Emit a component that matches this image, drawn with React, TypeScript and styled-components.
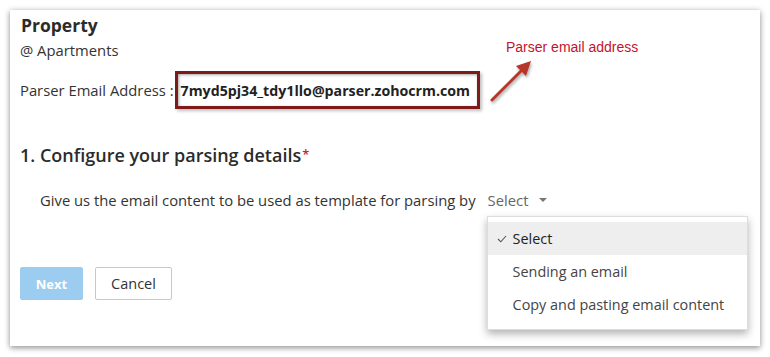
import React, { useState } from 'react';
import styled, { createGlobalStyle } from 'styled-components';

const OPTIONS = ['Select', 'Sending an email', 'Copy and pasting email content'];

export default function App() {
  const [selected, setSelected] = useState('Select');

  return (
    <>
      <GlobalStyle />
      <S_Page>
        <S_Panel>
          <S_Title>Property</S_Title>
          <S_Sub>@ Apartments</S_Sub>
          <S_EmailRow>
            <S_Label>Parser Email Address :</S_Label>
            <S_EmailBox>7myd5pj34_tdy1llo@parser.zohocrm.com</S_EmailBox>
            <S_Callout>
              <S_CalloutText>Parser email address</S_CalloutText>
              <S_Arrow width='48' height='48' viewBox='0 0 48 48'>
                <defs>
                  <filter id='sh' x='-30%' y='-30%' width='160%' height='160%'>
                    <feDropShadow dx='1' dy='2' stdDeviation='1.5' floodColor='#000' floodOpacity='0.35' />
                  </filter>
                </defs>
                <g filter='url(#sh)'>
                  <line x1='3' y1='43' x2='33' y2='13' stroke='#b8352a' strokeWidth='3' strokeLinecap='round' />
                  <polygon points='42,4 37,19 27,9' fill='#b8352a' />
                </g>
              </S_Arrow>
            </S_Callout>
          </S_EmailRow>

          <S_Heading>
            1. Configure your parsing details<S_Star>*</S_Star>
          </S_Heading>

          <S_FieldRow>
            <S_FieldText>Give us the email content to be used as template for parsing by</S_FieldText>
            <S_SelectWrap>
              <S_SelectButton>
                {selected}
                <S_Caret />
              </S_SelectButton>
              <S_Menu>
                {OPTIONS.map((o) => (
                  <S_Option key={o} active={o === selected} onClick={() => setSelected(o)}>
                    <S_Check>
                      {o === selected && (
                        <svg width='10' height='8' viewBox='0 0 10 8'>
                          <polyline points='1,4 3.8,6.8 9,1' fill='none' stroke='#555' strokeWidth='1.1' />
                        </svg>
                      )}
                    </S_Check>
                    {o}
                  </S_Option>
                ))}
              </S_Menu>
            </S_SelectWrap>
          </S_FieldRow>

          <S_Buttons>
            <S_Button primary>Next</S_Button>
            <S_Button>Cancel</S_Button>
          </S_Buttons>
        </S_Panel>
      </S_Page>
    </>
  );
}

const GlobalStyle = createGlobalStyle`
  body {
    margin: 0;
    background: #fff;
    font-family: 'Open Sans', Lato, sans-serif;
    color: #333;
  }
`;

const S_Page = styled.div`
  width: 770px;
  height: 357px;
  padding: 10px 10px 11px 10px;
  box-sizing: border-box;
`;

const S_Panel = styled.div`
  width: 750px;
  height: 336px;
  box-sizing: border-box;
  background: #fff;
  box-shadow: 0 1px 6px rgba(0, 0, 0, 0.35), 0 3px 5px rgba(0, 0, 0, 0.15);
  padding: 4px 10px 0 10px;
`;

const S_Title = styled.div`
  font-size: 17.5px;
  font-weight: 700;
  color: #2b2b2b;
  line-height: 22px;
  padding-left: 1px;
`;

const S_Sub = styled.div`
  font-size: 14.8px;
  line-height: 20px;
  margin-top: 4px;
  color: #333;
`;

const S_EmailRow = styled.div`
  display: flex;
  align-items: center;
  margin-top: 11px;
  position: relative;
`;

const S_Label = styled.span`
  font-size: 14.8px;
  color: #333;
  margin-right: 1px;
`;

const S_EmailBox = styled.div`
  border: 3px solid #7d1b1b;
  box-shadow: inset 1px 1px 3px rgba(0, 0, 0, 0.35), 2px 2px 3px rgba(0, 0, 0, 0.25);
  padding: 0 7px 0 3px;
  height: 38px;
  box-sizing: border-box;
  display: flex;
  align-items: center;
  font-size: 14.2px;
  font-weight: 700;
  color: #222;
`;

const S_Callout = styled.div`
  position: absolute;
  left: 472px;
  top: -32px;
  width: 160px;
  height: 70px;
`;

const S_CalloutText = styled.div`
  position: absolute;
  left: 14px;
  top: 0;
  font-family: 'Liberation Sans', Arial, sans-serif;
  font-size: 14px;
  line-height: 16px;
  color: #c4122f;
  white-space: nowrap;
`;

const S_Arrow = styled.svg`
  position: absolute;
  left: -3px;
  top: 18px;
`;

const S_Heading = styled.div`
  margin-top: 35px;
  font-size: 18px;
  font-weight: 600;
  color: #2b2b2b;
  line-height: 22px;
  height: 22px;
`;

const S_Star = styled.span`
  color: #d0202e;
  font-size: 13px;
  line-height: 0;
  vertical-align: 3px;
  margin-left: 1px;
`;

const S_FieldRow = styled.div`
  display: flex;
  align-items: flex-start;
  margin-top: 24px;
  padding-left: 20px;
`;

const S_FieldText = styled.span`
  font-size: 14.8px;
  line-height: 20px;
  color: #333;
`;

const S_SelectWrap = styled.div`
  position: relative;
  margin-left: 12px;
`;

const S_SelectButton = styled.div`
  display: flex;
  align-items: center;
  font-size: 14.8px;
  line-height: 20px;
  color: #666;
  cursor: pointer;
`;

const S_Caret = styled.span`
  margin-left: 11px;
  width: 0;
  height: 0;
  border-left: 4px solid transparent;
  border-right: 4px solid transparent;
  border-top: 4px solid #777;
`;

const S_Menu = styled.div`
  position: absolute;
  left: -1px;
  top: 26px;
  width: 261px;
  box-sizing: border-box;
  background: #fff;
  border: 1px solid #ddd;
  box-shadow: 0 4px 8px rgba(0, 0, 0, 0.3);
  padding: 5px 0 8px;
  z-index: 2;
`;

const S_Option = styled.div<{ active?: boolean }>`
  display: flex;
  align-items: center;
  height: 33px;
  padding-left: 9px;
  font-size: 14.4px;
  color: ${(p) => (p.active ? '#222' : '#444')};
  background: ${(p) => (p.active ? '#eeeeee' : 'transparent')};
  cursor: pointer;
`;

const S_Check = styled.span`
  display: flex;
  align-items: center;
  width: 16px;
`;

const S_Buttons = styled.div`
  display: flex;
  gap: 12px;
  margin-top: 57px;
`;

const S_Button = styled.button<{ primary?: boolean }>`
  height: 33px;
  width: ${(p) => (p.primary ? '63px' : '77px')};
  padding: 0;
  font-family: inherit;
  font-size: ${(p) => (p.primary ? '13px' : '14.5px')};
  font-weight: ${(p) => (p.primary ? 700 : 400)};
  border-radius: 2px;
  border: 1px solid ${(p) => (p.primary ? '#9ccdf0' : '#c8c8c8')};
  background: ${(p) => (p.primary ? '#9ccdf0' : '#fff')};
  color: ${(p) => (p.primary ? '#fff' : '#333')};
  cursor: pointer;
`;
